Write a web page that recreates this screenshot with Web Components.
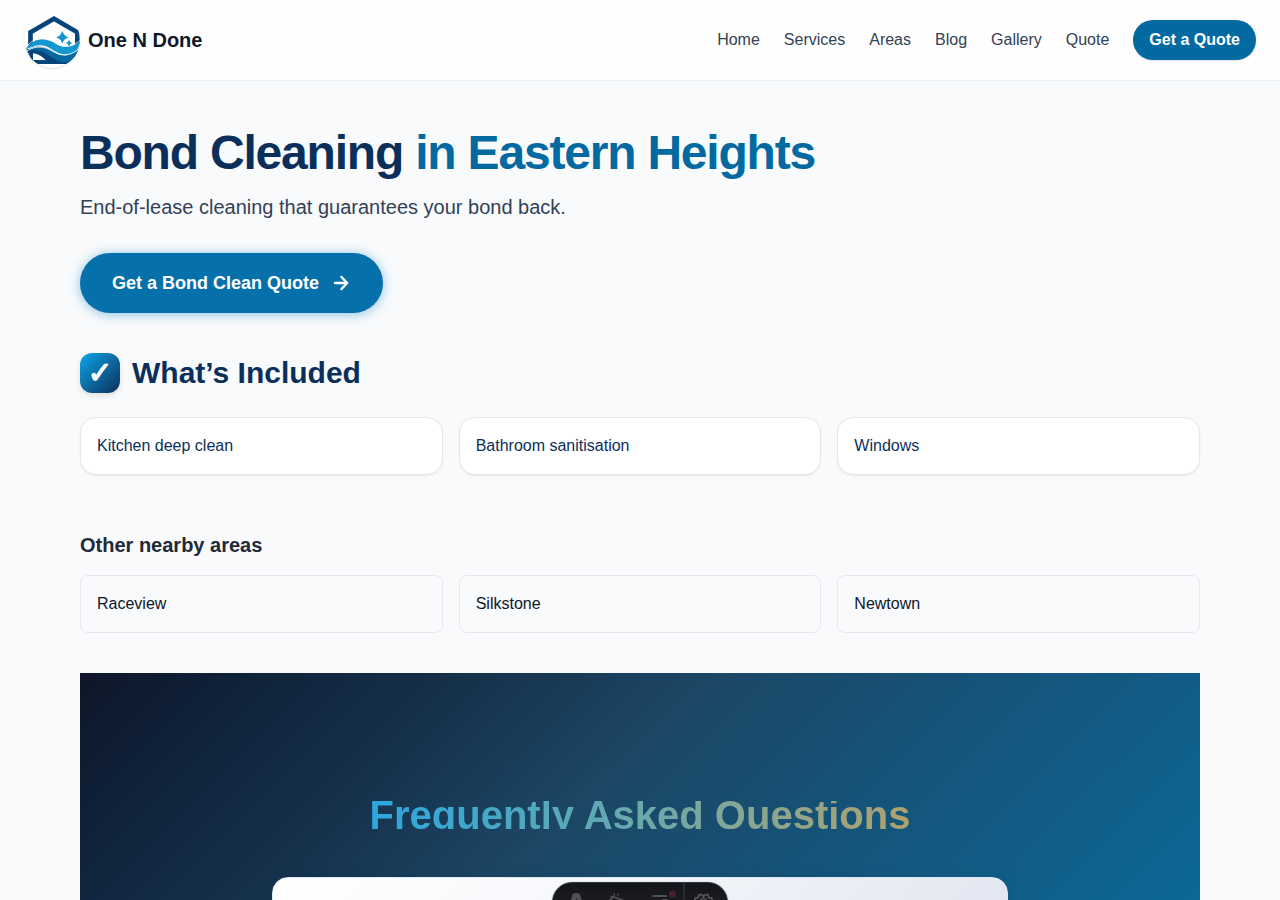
<!DOCTYPE html>
<html lang="en">
<head>
<meta charset="utf-8">
<title>Bond Cleaning in Eastern Heights | One N Done</title>
<style>
html,body{margin:0;height:900px;overflow:hidden}
body{background:#f8fafc;color:#0f172a;font:16px/24px "Liberation Sans",Arial,sans-serif}
</style>
</head>
<body>
<bond-page></bond-page>
<script>
const define = (name, html) => {
  const template = document.createElement('template');
  template.innerHTML = '<style>*{box-sizing:border-box}</style>' + html;
  customElements.define(name, class extends HTMLElement {
    constructor() {
      super();
      this.attachShadow({mode: 'open'}).append(template.content.cloneNode(true));
    }
  });
};

define('brand-logo', `
<style>
:host{display:block;width:56px;height:56px;border-radius:50%;background:#fff;box-shadow:0 1px 2px rgba(0,0,0,.12)}
svg{display:block;width:56px;height:56px;border-radius:50%}
</style>
<svg viewBox="24 12 168 168" aria-hidden="true">
<path d="M43.500 112V73L114 32L184 73V108" fill="none" stroke="#05457c" stroke-width="14"/>
<path d="M31 124C50 119 76 122 96 136C120 152 154 154 191 124L178 147L155 168H61L45 152Z" fill="#05457c"/>
<path d="M51 136C67 138 78 146 89 156H51Z" fill="#fff"/>
<path d="M31 132C53 108 88 111 116 133C142 151 168 142 191 119C189 136 177 151 162 160C126 171 108 143 80 131C60 123 44 124 31 132Z" fill="#0869a2"/>
<path d="M29 124C52 88 88 87 120 107C148 124 172 116 192 99C191 127 168 147 139 140C112 132 96 110 70 112C53 113 43 120 29 124Z" fill="#1397cf"/>
<path d="M31 130C51 116 76 112 101 125C125 139 155 151 190 122" fill="none" stroke="#fff" stroke-width="2.5"/>
<path d="M29 119C54 85 88 86 120 106C146 122 171 114 193 97" fill="none" stroke="#fff" stroke-width="2"/>
<path d="M139 68Q143 84 158 88Q143 92 139 108Q135 92 120 88Q135 84 139 68ZM159 95Q161 103 169 105Q161 107 159 116Q157 107 150 105Q157 103 159 95Z" fill="#1295cb"/>
</svg>`);

define('pill-button', `
<style>
:host{display:flex;align-items:center;height:40px;padding:0 16px;border-radius:40px;background:#0369a1;color:#fff;font-weight:700;white-space:nowrap;box-shadow:0 1px 2px rgba(0,0,0,.1)}
:host([large]){width:303px;height:60px;padding:0 32px;gap:12px;background:#0570aa;font-size:18px;box-shadow:0 2px 12px rgba(14,130,200,.3),0 0 10px rgba(14,130,200,.2)}
</style><slot></slot>`);

define('site-header', `
<style>
:host{display:flex;height:81px;padding:0 24px;align-items:center;justify-content:space-between;background:#fefefe;border-bottom:1px solid #eff2f5}
.brand,nav{display:flex;align-items:center}
.brand{gap:8px;font-size:20px;font-weight:700}
nav{gap:24px;color:#334155}
</style>
<div class="brand"><brand-logo></brand-logo><span>One N Done</span></div>
<nav><span>Home</span><span>Services</span><span>Areas</span><span>Blog</span><span>Gallery</span><span>Quote</span><pill-button>Get a Quote</pill-button></nav>`);

define('info-card', `
<style>
:host{display:block;padding:16px;border:1px solid #e5e7eb;border-radius:8px}
:host([raised]){background:#fff;color:#0b2f5b;border-radius:16px;box-shadow:0 1px 2px rgba(0,0,0,.07)}
</style><slot></slot>`);

define('card-grid', `
<style>:host{display:grid;grid-template-columns:repeat(3,1fr);gap:16px}</style><slot></slot>`);

define('faq-section', `
<style>
:host{display:block;height:700px;padding-top:128px;background:linear-gradient(135deg,#0e1628 0,#0f2138 110px,#15304a 270px,#1c4664 440px,#0c6797 952px)}
h2{width:fit-content;margin:0 auto 48px;font-size:40px;line-height:28px;font-weight:700;color:transparent;background:linear-gradient(90deg,#2ba7df,#6aa9ab 50%,#b0a16e);-webkit-background-clip:text;background-clip:text}
.panel{width:736px;height:400px;margin:0 auto;border:1px solid #d7e9f5;border-radius:16px;background:linear-gradient(135deg,#fff 0,#f8f9fc 200px,#e3e7f1 530px);box-shadow:0 4px 16px rgba(0,20,50,.12)}
</style>
<h2>Frequently Asked Questions</h2><div class="panel"></div>`);

define('dev-toolbar', `
<style>
:host{position:fixed;left:552px;top:882px;display:block;width:176px;height:40px;border:1px solid #343841;border-radius:20px;overflow:hidden;background:linear-gradient(#13151a,#20222a);box-shadow:0 0 2px rgba(19,21,26,.2)}
svg{display:block}
</style>
<svg width="174" height="38" viewBox="553 883 174 38" fill="none" stroke="#505155" stroke-width="1.6" aria-hidden="true">
<path d="M569.500 905L572.5 894.5Q573 893 576 893Q579.500 893 580 894.5L583.500 905L578.5 903L576.5 898L574.5 903Z" fill="#505155" stroke="none"/>
<path d="M611 896L614 908L617 904L624 907M611 896L625 901L620 904M614.5 895.5L614 893.5M617.5 895.5L618.5 893.5M611 899L609.5 899.5"/>
<path d="M652.5 896H667" stroke-width="2"/>
<circle cx="665" cy="902.5" r="3"/>
<circle cx="672.5" cy="894" r="3.5" fill="#47202f" stroke="none"/>
<path d="M684 883V921" stroke="#292b31" stroke-width="2"/>
<path d="M695 902V899Q695 897.5 697.5 898L698.5 897Q698.5 894.5 700.5 894.5Q702.5 894.5 703.5 896.5Q704.5 894.5 706.5 894.5Q708.5 894.5 708.5 897L709.5 898Q712 897.5 712 899V902" stroke-width="1.9"/>
<circle cx="703.5" cy="902" r="3.6"/>
</svg>`);

define('bond-page', `
<style>
:host{display:block;height:900px;overflow:hidden}
main{width:1120px;margin:0 auto;padding-top:48px}
h1{margin:0 0 16px;font-size:48px;line-height:48px;letter-spacing:-1.2px;color:#0b2f5b}
h1 span{color:#0369a1}
.intro{margin:0 0 32px;font-size:20px;line-height:28px;color:#334155}
.title{display:flex;align-items:center;gap:12px;margin:40px 0 24px;height:40px}
.title h2{margin:0;font-size:30px;line-height:36px;color:#0b2f5b}
.tick{display:grid;place-items:center;width:40px;height:40px;border-radius:12px;background:linear-gradient(135deg,#0ea5e9,#0b2f5b);box-shadow:0 3px 6px rgba(0,0,0,.1);color:#fff;font:700 30px/36px "Liberation Sans","DejaVu Sans",sans-serif;-webkit-text-stroke:1.2px #fff}
h3{margin:56px 0 16px;font-size:20px;line-height:28px;color:#1f2937}
faq-section{margin-top:40px}
svg{display:block}
</style>
<site-header></site-header>
<main>
<h1>Bond Cleaning <span>in Eastern Heights</span></h1>
<p class="intro">End-of-lease cleaning that guarantees your bond back.</p>
<pill-button large><span>Get a Bond Clean Quote</span><svg width="20" height="20" viewBox="0 0 20 20" fill="none" stroke="#fff" stroke-width="2.5" stroke-linecap="round" stroke-linejoin="round" aria-hidden="true"><path d="M4 10H16M10.5 4L16.2 10L10.5 16"/></svg></pill-button>
<div class="title"><span class="tick">✓</span><h2>What’s Included</h2></div>
<card-grid><info-card raised>Kitchen deep clean</info-card><info-card raised>Bathroom sanitisation</info-card><info-card raised>Windows</info-card></card-grid>
<h3>Other nearby areas</h3>
<card-grid><info-card>Raceview</info-card><info-card>Silkstone</info-card><info-card>Newtown</info-card></card-grid>
<faq-section></faq-section>
</main>
<dev-toolbar></dev-toolbar>`);
</script>
</body>
</html>
